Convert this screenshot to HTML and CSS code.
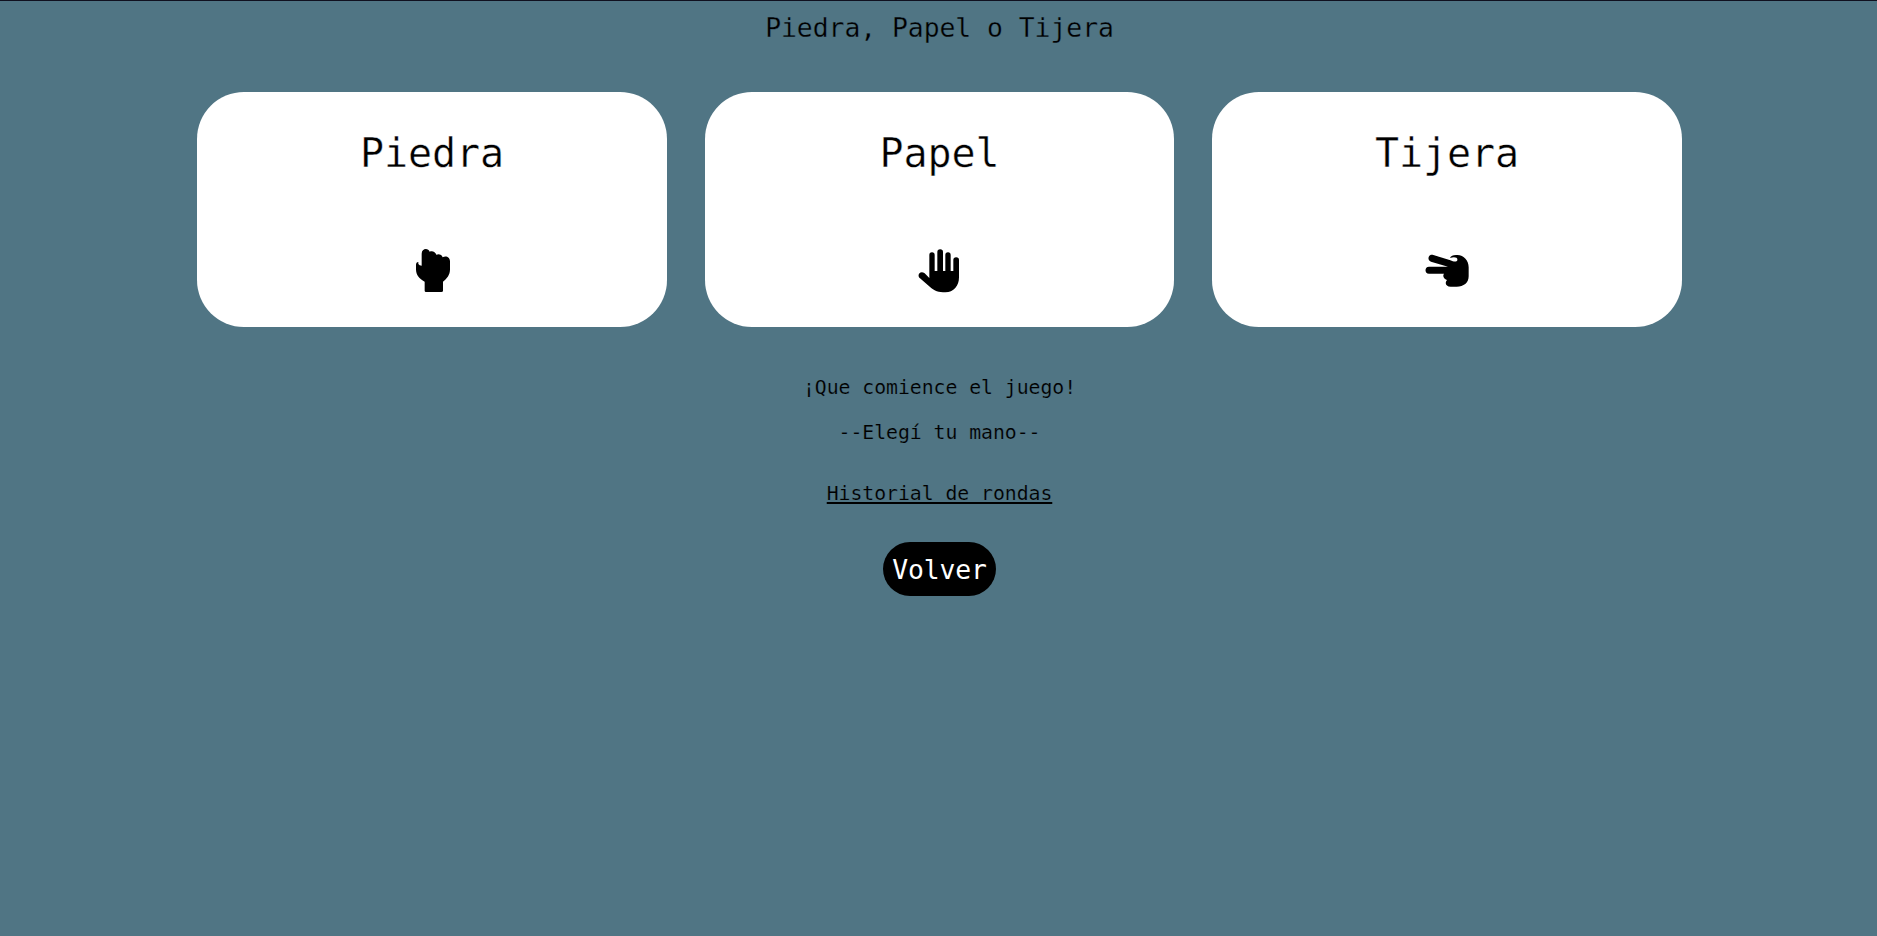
FILE: index.html
```html
<!DOCTYPE html>
<html lang="es">
<head>
<meta charset="utf-8">
<title>Piedra, Papel o Tijera</title>
<link rel="stylesheet" href="styles.css">
</head>
<body>
<header class="header"><h1 class="title">Piedra, Papel o Tijera</h1></header>
<main class="game">
  <section class="hands">
    <button class="card">
      <span class="card-name">Piedra</span>
      <svg class="icon" viewBox="0 0 144 144"><path d="M41 23C41 6 61 5 65 17C74 14 82 18 85 26C94 22 101 26 104 34C114 28 126 34 126 46V70C126 87 117 98 105 107V134Q105 138 100 138H54Q50 138 50 134V107C34 99 24 87 24 70V57Q24 48 31 48V54Q34 59 41 59Z"/></svg>
    </button>
    <button class="card">
      <span class="card-name">Papel</span>
      <svg class="icon" viewBox="0 0 144 144"><path d="M40 96V27a8 8 0 0 1 16 0V75H64V18a8.500 8.500 0 0 1 17 0V75H88V27a8 8 0 0 1 16 0V75H112V42a8.500 8.500 0 0 1 17 0V94C129 120 113 139 88 139C68 139 55 135 43 124L12 97C1 87 13 72 26 82Z"/></svg>
    </button>
    <button class="card">
      <span class="card-name">Tijera</span>
      <svg class="icon" viewBox="0 0 144 144"><path d="M31 27L82 43C91 47 101 49 103 43C105 34 94 32 81 36C83 29 92 26 103 27C123 28 137 43 137 64V91C137 111 122 122 101 122H83C69 122 64 111 72 102C62 99 58 89 63 83H18C4 83 4 62 18 62H75L24 47C10 42 17 22 31 27Z"/></svg>
    </button>
  </section>
  <p class="message">¡Que comience el juego!</p>
  <p class="message prompt">--Elegí tu mano--</p>
  <p class="message history">Historial de rondas</p>
  <button class="back">Volver</button>
</main>
</body>
</html>
```
FILE: styles.css
```css
* {
  box-sizing: border-box;
}

body {
  margin: 0;
  min-height: 100vh;
  padding-left: 2px;
  border-top: 1px solid #10101f;
  background: #507584;
  color: #000;
  font-family: "DejaVu Sans Mono", monospace;
}

.header {
  height: 91px;
  padding-top: 11px;
  text-align: center;
}

.title {
  margin: 0;
  font-size: 26.4px;
  line-height: 32px;
  font-weight: 400;
  letter-spacing: -0.04px;
  -webkit-text-stroke: 0.3px #507584;
}

.game {
  display: flex;
  flex-direction: column;
  align-items: center;
}

.hands {
  display: grid;
  grid-template-columns: 470px 469px 470px;
  column-gap: 38px;
  margin-bottom: 45px;
}

.card {
  display: flex;
  flex-direction: column;
  align-items: center;
  height: 235px;
  padding: 37px 0 0;
  border: 0;
  border-radius: 47px;
  background: #fff;
  color: #000;
  font-family: inherit;
}

.card-name {
  height: 117px;
  font-size: 40px;
  line-height: 48px;
  letter-spacing: -0.1px;
  -webkit-text-stroke: 0.4px #fff;
}

.icon {
  width: 48px;
  height: 48px;
}

.message {
  margin: 0 0 13px;
  font-size: 19.8px;
  line-height: 32px;
  letter-spacing: -0.04px;
  -webkit-text-stroke: 0.2px #507584;
}

.prompt {
  margin-bottom: 29px;
}

.history {
  margin-bottom: 32px;
  text-decoration: underline 2px #000;
  text-underline-offset: 2px;
}

.back {
  width: 113px;
  height: 54px;
  padding: 0;
  border: 0;
  border-radius: 27px;
  background: #000;
  color: #fff;
  font-family: inherit;
  font-size: 26.4px;
  letter-spacing: -0.1px;
}
```
